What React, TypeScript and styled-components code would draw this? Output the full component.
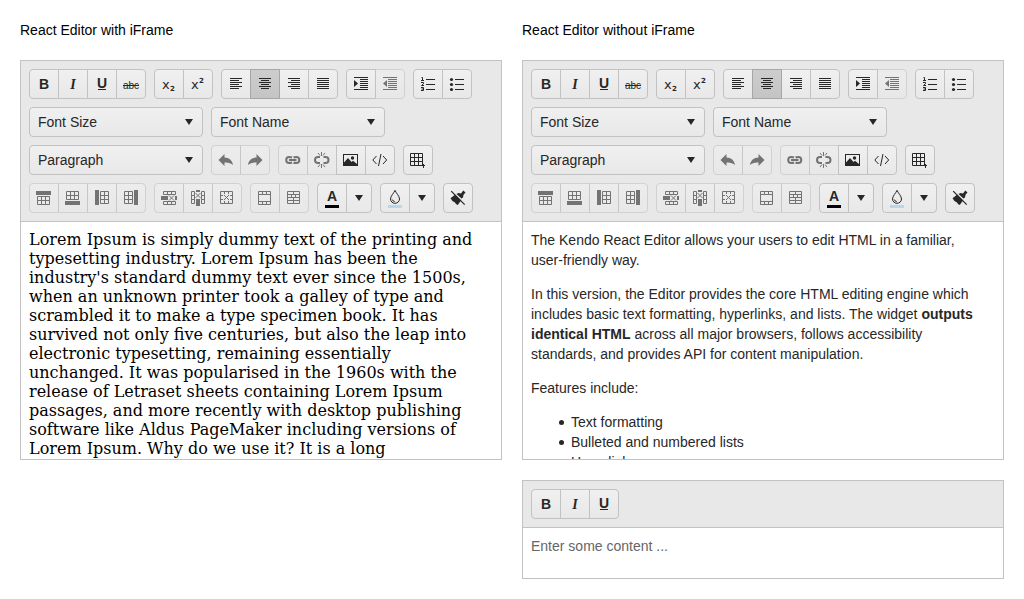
import React from "react";
import styled, { createGlobalStyle, css } from "styled-components";

const GlobalStyle = createGlobalStyle`
  * { box-sizing: border-box; }
  body {
    margin: 0;
    background: #fff;
    color: #000;
    font: 14px/20px "Liberation Sans", Arial, sans-serif;
  }
`;

const Page = styled.main`
  display: grid;
  grid-template-columns: 1fr 1fr;
  gap: 20px;
  align-items: start;
  padding: 20px;
`;

const Column = styled.section`
  display: flex;
  flex-direction: column;
  gap: 20px;
  min-width: 0;
`;

const Title = styled.h2`
  margin: 0;
  font-size: 14px;
  font-weight: 400;
`;

const EditorFrame = styled.div`
  border: 1px solid #c2c2c2;
  background: #fff;
`;

const Toolbar = styled.div`
  display: flex;
  flex-wrap: wrap;
  gap: 8px;
  padding: 8px;
  border-bottom: 1px solid #c2c2c2;
  background: #e8e8e8;
`;

const surface = css`
  border: 1px solid #c2c2c2;
  background: linear-gradient(#f0f0f0, #e8e8e8);
  color: #272727;
`;

const Group = styled.div`
  display: flex;
`;

const ToolButton = styled.button<{ $narrow?: boolean }>`
  ${surface}
  display: flex;
  align-items: center;
  justify-content: center;
  width: ${(p) => (p.$narrow ? 26 : 30)}px;
  height: 30px;
  padding: 0;

  & + & {
    margin-left: -1px;
  }
  &:first-child {
    border-top-left-radius: 4px;
    border-bottom-left-radius: 4px;
  }
  &:last-child {
    border-top-right-radius: 4px;
    border-bottom-right-radius: 4px;
  }
  &:disabled {
    opacity: 0.6;
  }
  &[aria-pressed="true"] {
    z-index: 1;
    border-color: #a6a6a6;
    background: linear-gradient(#cdcdcd, #c4c4c4);
  }
`;

const SelectBox = styled.div`
  display: grid;
  align-items: center;
  width: 174px;

  & > * {
    grid-area: 1 / 1;
  }
  & > svg {
    justify-self: end;
    margin-right: 6px;
    color: #272727;
    pointer-events: none;
  }
`;

const Select = styled.select`
  ${surface}
  appearance: none;
  width: 100%;
  height: 30px;
  padding: 0 24px 0 8px;
  border-radius: 4px;
  font: inherit;
`;

const Svg = styled.svg`
  display: block;
  width: 16px;
  height: 16px;
  overflow: visible;
  fill: currentColor;
`;

const Content = styled.div<{ $height: number }>`
  height: ${(p) => p.$height}px;
  padding: 8px 24px 8px 8px;
  overflow: hidden;
  outline: none;
  color: #272727;

  p {
    margin: 0 0 14px;
  }
  ul {
    margin: 0 0 14px;
    padding-left: 40px;
    list-style: none;
  }
  li::before {
    content: "";
    display: inline-block;
    width: 5px;
    height: 5px;
    margin: 0 7px 0 -12px;
    border-radius: 50%;
    background: currentColor;
    vertical-align: 2px;
  }
`;

const FrameContent = styled(Content)`
  color: #000;
  font: 16px/19px "DejaVu Serif", serif;
`;

const PlainInput = styled.textarea`
  display: block;
  width: 100%;
  height: 50px;
  padding: 8px;
  border: 0;
  outline: none;
  resize: none;
  background: transparent;
  color: #272727;
  font: inherit;

  &::placeholder {
    color: #666;
    opacity: 1;
  }
`;

const line = { fill: "none", stroke: "currentColor", strokeWidth: 1 };
const sans = { fontFamily: '"Liberation Sans", sans-serif' };
const dejavu = { fontFamily: '"DejaVu Sans", sans-serif' };

const icons: Record<string, React.ReactNode> = {
  bold: <text x="8" y="13" textAnchor="middle" fontSize="14" fontWeight="700" {...sans}>B</text>,
  italic: (
    <text x="8" y="13" textAnchor="middle" fontSize="14" fontStyle="italic" fontWeight="700" fontFamily='"Liberation Serif", serif'>I</text>
  ),
  underline: (
    <>
      <text x="8" y="12" textAnchor="middle" fontSize="14" fontWeight="700" {...sans}>U</text>
      <path d="M4 13h8v1H4z" />
    </>
  ),
  strike: (
    <>
      <text x="8" y="13" textAnchor="middle" fontSize="10" {...sans}>abc</text>
      <path d="M0 9h16v1H0z" />
    </>
  ),
  sub: (
    <>
      <text x="1" y="13" fontSize="13" {...dejavu}>x</text>
      <text x="9" y="15" fontSize="7" fontWeight="700" {...dejavu}>2</text>
    </>
  ),
  sup: (
    <>
      <text x="1" y="13" fontSize="13" {...dejavu}>x</text>
      <text x="9" y="7" fontSize="7" fontWeight="700" {...dejavu}>2</text>
    </>
  ),
  left: <path d="M2 2h12v1H2zM2 4h9v1H2zM2 6h12v1H2zM2 8h9v1H2zM2 10h12v1H2zM2 12h9v1H2z" />,
  center: <path d="M2 2h12v1H2zM4 4h8v1H4zM2 6h12v1H2zM4 8h8v1H4zM2 10h12v1H2zM4 12h8v1H4z" />,
  right: <path d="M2 2h12v1H2zM5 4h9v1H5zM2 6h12v1H2zM5 8h9v1H5zM2 10h12v1H2zM5 12h9v1H5z" />,
  justify: <path d="M2 2h12v1H2zM2 4h12v1H2zM2 6h12v1H2zM2 8h12v1H2zM2 10h12v1H2zM2 12h12v1H2z" />,
  indent: (
    <path d="M1 1h14v1H1zM7 3h8v1H7zM7 5h8v1H7zM7 7h8v1H7zM7 9h8v1H7zM7 11h8v1H7zM1 13h14v1H1zM1 4l4 3.500L1 11z" />
  ),
  outdent: (
    <path d="M1 1h14v1H1zM6 3h9v1H6zM6 5h9v1H6zM6 7h9v1H6zM6 9h9v1H6zM6 11h9v1H6zM1 13h14v1H1zM5 4L1 7.500L5 11z" />
  ),
  ordered: (
    <>
      <path d="M6 3h9v1H6zM6 8h9v1H6zM6 13h9v1H6z" />
      <path d="M1.500 1.500h1v3M1 4.500h3M1 6.500h2.500v1.200L1.500 9.500h2.500M1 11.500h2.500v3H1M1.500 13h2" {...line} />
    </>
  ),
  bullets: (
    <>
      <path d="M6 3h9v1H6zM6 8h9v1H6zM6 13h9v1H6z" />
      <circle cx="2.500" cy="3.500" r="1.600" />
      <circle cx="2.500" cy="8.500" r="1.600" />
      <circle cx="2.500" cy="13.500" r="1.600" />
    </>
  ),
  undo: <path d="M.5 8L6.500 2v3.500C11 5.500 14.500 8.500 15 13 13 11 10 10.200 6.500 10.500V14z" />,
  redo: <path d="M15.500 8L9.500 2v3.500C5 5.500 1.500 8.500 1 13c2-2 5-2.800 8.500-2.500V14z" />,
  link: (
    <path
      d="M7 10.500Q6 11 4.200 11A3 3 0 0 1 4.200 5Q6 5 7 5.500M8.500 5.500Q9.500 5 11.300 5A3 3 0 0 1 11.300 11Q9.500 11 8.500 10.500M4 8h7.500"
      fill="none" stroke="currentColor" strokeWidth="2"
    />
  ),
  unlink: (
    <>
      <path d="M6 5H4a3 3 0 0 0 0 6h2M9.500 5h2a3 3 0 0 1 0 6h-2" fill="none" stroke="currentColor" strokeWidth="2" />
      <path d="M7.500 0v4M4 1l2 2.500M11 1L9 3.500M7.500 12v4M4 15l2-2.500M11 15l-2-2.500" {...line} />
    </>
  ),
  image: (
    <>
      <path fillRule="evenodd" d="M0 2h15v12H0zM1 3v10h13V3z" />
      <path d="M1 13V10.500L5 6l3.500 4L10 8.800l4 3.200v1z" />
      <circle cx="9.500" cy="6" r="1.700" />
    </>
  ),
  code: <path d="M4.500 4L.8 8l3.700 4M11 4l3.700 4L11 12M9 2L6.500 14" {...line} />,
  table: (
    <>
      <path d="M.5 1.500h12v12H.5zM4.500 1v13M8.500 1v13M0 5.500h13M0 9.500h13" {...line} />
      <path d="M13.500 12v4M11 13.500h4" {...line} />
    </>
  ),
  rowAbove: (
    <>
      <path d="M0 1h15v4H0z" />
      <path d="M1.500 6.500h12v8h-12zM5.500 6v9M9.500 6v9M1 10.500h13" {...line} />
    </>
  ),
  rowBelow: (
    <>
      <path d="M0 11h15v4H0z" />
      <path d="M1.500 1.500h12v8h-12zM5.500 1v9M9.500 1v9M1 5.500h13" {...line} />
    </>
  ),
  colBefore: (
    <>
      <path d="M1 0h4v15H1z" />
      <path d="M6.500 1.500h8v12h-8zM10.500 1v13M6 5.500h9M6 9.500h9" {...line} />
    </>
  ),
  colAfter: (
    <>
      <path d="M11 0h4v15h-4z" />
      <path d="M1.500 1.500h8v12h-8zM5.500 1v13M1 5.500h9M1 9.500h9" {...line} />
    </>
  ),
  delRow: (
    <>
      <path d="M0 6h7v4H0zM14 6h2v4h-2z" />
      <path d="M2.500 1.500h12v3h-12zM6.500 1v4M10.500 1v4M2.500 11.500h12v3h-12zM6.500 11v4M10.500 11v4M8 5.500l5 5M13 5.500l-5 5" {...line} />
    </>
  ),
  delCol: (
    <>
      <path d="M6 0h4v2H6zM6 9h4v7H6z" />
      <path d="M1.500 1.500h3v12h-3zM1 5.500h4M1 9.500h4M11.500 1.500h3v12h-3zM11 5.500h4M11 9.500h4M5.500 3l5 5M10.500 3l-5 5" {...line} />
    </>
  ),
  delTable: (
    <path d="M3 1.500H1.500v12h12v-12H3M5.500 1v3M9.500 1v3M5.500 11v3M9.500 11v3M1 5.500h3M1 9.500h3M11 5.500h3M11 9.500h3M5 5l5 5M10 5l-5 5" {...line} />
  ),
  merge: <path d="M1.500 1.500h12v13h-12zM1 4.500h13M1 11.500h13M5.500 1v4M9.500 1v4M5.500 11v4M9.500 11v4" {...line} />,
  split: <path d="M1.500 1.500h12v12h-12zM1 4.500h13M1 7.500h13M1 10.500h13M7.500 1v4M5.500 4v4M9.500 4v4M7.500 7v7" {...line} />,
  color: (
    <>
      <text x="8" y="11" textAnchor="middle" fontSize="14" fontWeight="700" {...sans}>A</text>
      <path d="M1 15h14v3H1z" fill="#000" />
    </>
  ),
  drop: (
    <>
      <path d="M8 .3C7 3 3.500 6 3.500 9a4.500 4.300 0 0 0 9 0C12.500 6 9 3 8 .3z" {...line} />
      <path d="M5.200 9.500q.5 1.800 2.500 2" {...line} />
      <path d="M1 15h14v3H1z" fill="#b9d7ec" />
    </>
  ),
  caret: <path d="M4 5h8l-4 6z" />,
  clean: (
    <>
      <path d="M.5 8.300L5.300 4.500l6 5.500-3.500 5Q5.500 14 5 12.500 2 11.500 .5 8.300z" />
      <path d="M6.500 4l2-1 2.500.5L13.300.5 15.500 2.500l-2 2.200L13 7.500l-1.500 1z" />
      <path d="M2 .8L15 13.800" fill="none" stroke="#ececec" strokeWidth="1" />
      <path d="M1.200 1.200L14.700 14.700" fill="none" stroke="currentColor" strokeWidth="1.200" />
    </>
  ),
};

function Icon({ name }: { name: string }) {
  return <Svg viewBox="0 0 16 16" aria-hidden="true">{icons[name]}</Svg>;
}

interface Tool {
  icon: string;
  label: string;
  disabled?: boolean;
  pressed?: boolean;
}

function Tools({ items }: { items: Tool[] }) {
  return (
    <Group role="group">
      {items.map((t) => (
        <ToolButton
          key={t.label}
          type="button"
          aria-label={t.label}
          title={t.label}
          disabled={t.disabled}
          aria-pressed={t.pressed}
          $narrow={t.icon === "caret"}
        >
          <Icon name={t.icon} />
        </ToolButton>
      ))}
    </Group>
  );
}

function DropDown({ label, value }: { label: string; value: string }) {
  return (
    <SelectBox>
      <Select aria-label={label} defaultValue={value}>
        <option>{value}</option>
      </Select>
      <Icon name="caret" />
    </SelectBox>
  );
}

const basic: Tool[] = [
  { icon: "bold", label: "Bold" },
  { icon: "italic", label: "Italic" },
  { icon: "underline", label: "Underline" },
];

function FullToolbar() {
  return (
    <Toolbar role="toolbar" aria-label="Formatting">
      <Tools items={[...basic, { icon: "strike", label: "Strikethrough" }]} />
      <Tools items={[{ icon: "sub", label: "Subscript" }, { icon: "sup", label: "Superscript" }]} />
      <Tools
        items={[
          { icon: "left", label: "Align left" },
          { icon: "center", label: "Align center", pressed: true },
          { icon: "right", label: "Align right" },
          { icon: "justify", label: "Justify" },
        ]}
      />
      <Tools items={[{ icon: "indent", label: "Indent" }, { icon: "outdent", label: "Outdent", disabled: true }]} />
      <Tools items={[{ icon: "ordered", label: "Ordered list" }, { icon: "bullets", label: "Unordered list" }]} />
      <DropDown label="Font size" value="Font Size" />
      <DropDown label="Font name" value="Font Name" />
      <DropDown label="Format" value="Paragraph" />
      <Tools items={[{ icon: "undo", label: "Undo", disabled: true }, { icon: "redo", label: "Redo", disabled: true }]} />
      <Tools
        items={[
          { icon: "link", label: "Insert link", disabled: true },
          { icon: "unlink", label: "Remove link", disabled: true },
          { icon: "image", label: "Insert image" },
          { icon: "code", label: "View HTML" },
        ]}
      />
      <Tools items={[{ icon: "table", label: "Insert table" }]} />
      <Tools
        items={[
          { icon: "rowAbove", label: "Add row above", disabled: true },
          { icon: "rowBelow", label: "Add row below", disabled: true },
          { icon: "colBefore", label: "Add column before", disabled: true },
          { icon: "colAfter", label: "Add column after", disabled: true },
        ]}
      />
      <Tools
        items={[
          { icon: "delRow", label: "Delete row", disabled: true },
          { icon: "delCol", label: "Delete column", disabled: true },
          { icon: "delTable", label: "Delete table", disabled: true },
        ]}
      />
      <Tools items={[{ icon: "merge", label: "Merge cells", disabled: true }, { icon: "split", label: "Split cell", disabled: true }]} />
      <Tools items={[{ icon: "color", label: "Text color" }, { icon: "caret", label: "Choose text color" }]} />
      <Tools items={[{ icon: "drop", label: "Background color" }, { icon: "caret", label: "Choose background color" }]} />
      <Tools items={[{ icon: "clean", label: "Clean formatting" }]} />
    </Toolbar>
  );
}

export default function App() {
  return (
    <>
      <GlobalStyle />
      <Page>
        <Column>
          <Title>React Editor with iFrame</Title>
          <EditorFrame>
            <FullToolbar />
            <FrameContent $height={237} contentEditable suppressContentEditableWarning spellCheck={false} role="textbox" aria-label="Framed editor content">
              Lorem Ipsum is simply dummy text of the printing and typesetting industry. Lorem Ipsum has been the
              industry's standard dummy text ever since the 1500s, when an unknown printer took a galley of type and
              scrambled it to make a type specimen book. It has survived not only five centuries, but also the leap
              into electronic typesetting, remaining essentially unchanged. It was popularised in the 1960s with the
              release of Letraset sheets containing Lorem Ipsum passages, and more recently with desktop publishing
              software like Aldus PageMaker including versions of Lorem Ipsum. Why do we use it? It is a long
            </FrameContent>
          </EditorFrame>
        </Column>
        <Column>
          <Title>React Editor without iFrame</Title>
          <EditorFrame>
            <FullToolbar />
            <Content $height={237} contentEditable suppressContentEditableWarning spellCheck={false} role="textbox" aria-label="Editor content">
              <p>The Kendo React Editor allows your users to edit HTML in a familiar, user-friendly way.</p>
              <p>
                In this version, the Editor provides the core HTML editing engine which includes basic text formatting,
                hyperlinks, and lists. The widget <strong>outputs identical HTML</strong> across all major browsers,
                follows accessibility standards, and provides API for content manipulation.
              </p>
              <p>Features include:</p>
              <ul>
                <li>Text formatting</li>
                <li>Bulleted and numbered lists</li>
                <li>Hyperlinks</li>
              </ul>
            </Content>
          </EditorFrame>
          <EditorFrame>
            <Toolbar role="toolbar" aria-label="Basic formatting">
              <Tools items={basic} />
            </Toolbar>
            <PlainInput aria-label="Content" placeholder="Enter some content ..." />
          </EditorFrame>
        </Column>
      </Page>
    </>
  );
}
